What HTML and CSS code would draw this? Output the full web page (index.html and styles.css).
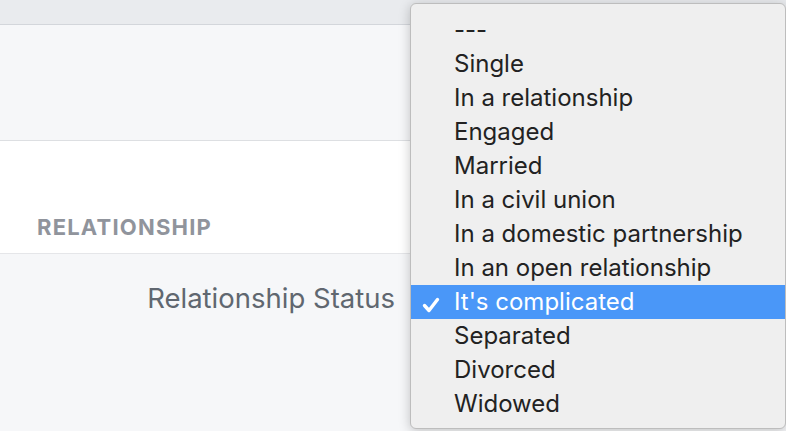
FILE: index.html
```html
<!DOCTYPE html>
<html>

<head>
    <link rel="stylesheet" href="styles.css">
</head>

<body>
    <div class="topbar"></div>
    <div class="panel"></div>
    <div class="section-head">
        <h3>RELATIONSHIP</h3>
    </div>
    <div class="field-row">
        <div class="field-label">Relationship Status</div>
    </div>

    <!-- open select menu -->
    <ul class="menu">
        <li>---</li>
        <li>Single</li>
        <li>In a relationship</li>
        <li>Engaged</li>
        <li>Married</li>
        <li>In a civil union</li>
        <li>In a domestic partnership</li>
        <li>In an open relationship</li>
        <li class="selected">
            <svg class="check" width="18" height="16" viewBox="0 0 18 16">
                <path d="M2.5 8.5 L7 13.5 L15.5 2.5" fill="none" stroke="#ffffff" stroke-width="3.4" stroke-linecap="round" stroke-linejoin="round" />
            </svg>It's complicated
        </li>
        <li>Separated</li>
        <li>Divorced</li>
        <li>Widowed</li>
    </ul>
</body>

</html>
```

FILE: styles.css
```css
body {
    margin: 0;
    font-family: Inter, "Liberation Sans", sans-serif;
    background-color: #f6f7f9;
    height: 431px;
    overflow: hidden;
}

.topbar {
    height: 24px;
    background-color: #e9ebee;
    border-bottom: 1px solid #d3d6db;
}

.panel {
    height: 115px;
    background-color: #f6f7f9;
    border-bottom: 1px solid #dddfe2;
}

.section-head {
    height: 112px;
    background-color: #ffffff;
    border-bottom: 1px solid #e5e6e9;
    display: flex;
    align-items: flex-end;
}

.section-head h3 {
    margin: 0 0 13px 37px;
    font-size: 22px;
    font-weight: 700;
    letter-spacing: 1.2px;
    color: #90949c;
}

.field-row {
    display: flex;
    padding-top: 27px;
}

.field-label {
    width: 395px;
    text-align: right;
    font-size: 27.5px;
    color: #606770;
}

.menu {
    position: absolute;
    left: 410px;
    top: 3px;
    width: 374px;
    margin: 0;
    padding: 9px 0 7px 0;
    list-style: none;
    background-color: #efefef;
    border: 1px solid #bdbdbd;
    border-radius: 6px;
    box-shadow: 0 2px 12px rgba(0, 0, 0, 0.22);
}

.menu li {
    height: 34px;
    line-height: 34px;
    padding-left: 43px;
    font-size: 24px;
    color: #222222;
    position: relative;
}

.menu li.selected {
    background-color: #4a97f8;
    color: #ffffff;
}

.check {
    position: absolute;
    left: 11px;
    top: 12px;
}
```
